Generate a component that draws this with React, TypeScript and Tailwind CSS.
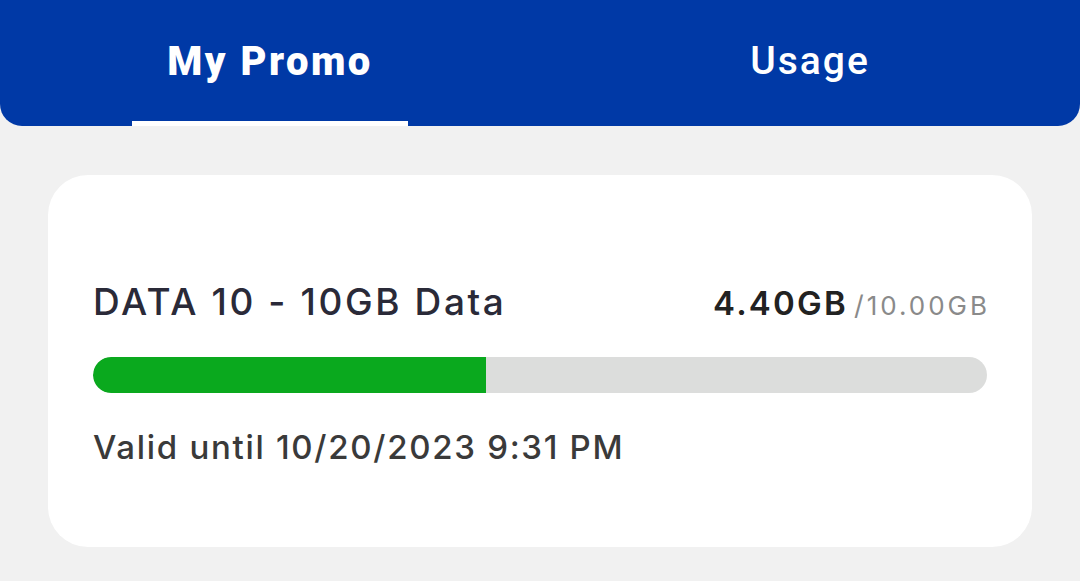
export default function App() {
  return (
    <div className="w-[1080px] h-[581px] bg-[#f1f1f1] overflow-hidden" style={{ fontFamily: 'Inter, "Noto Sans", sans-serif' }}>
      <div className="h-[126px] bg-[#0039a6] rounded-b-[22px] flex">
        <div className="w-1/2 flex justify-center">
          <div className="w-[276px] h-full flex flex-col items-center justify-end">
            <div className="flex-1 flex items-center pt-[2px] text-white text-[40px] font-black tracking-[2.5px]" style={{ fontFamily: 'Roboto, "Noto Sans", sans-serif' }}>My Promo</div>
            <div className="w-full h-[5px] bg-white" />
          </div>
        </div>
        <div className="w-1/2 flex justify-center">
          <div className="h-full flex flex-col items-center pb-[5px]">
            <div className="flex-1 flex items-center pt-[2px] text-white text-[39px] font-medium tracking-[2px]" style={{ fontFamily: 'Roboto, "Noto Sans", sans-serif' }}>Usage</div>
          </div>
        </div>
      </div>
      <div className="mx-[48px] mt-[49px] h-[372px] bg-white rounded-[40px] px-[45px] pt-[108px]">
        <div className="flex items-baseline justify-between h-[48px]">
          <div className="text-[37px] font-medium text-[#2a2a38] leading-none tracking-[2.6px]">DATA 10 - 10GB Data</div>
          <div className="flex items-baseline">
            <span className="text-[33px] font-semibold text-[#222] leading-none tracking-[2.2px]">4.40GB</span>
            <span className="text-[27px] text-[#8a8a8a] leading-none ml-[6px]">/</span>
            <span className="text-[26px] text-[#8a8a8a] leading-none ml-[3px] tracking-[3px] mr-[-3px]">10.00GB</span>
          </div>
        </div>
        <div className="mt-[26px] h-[36px] rounded-full bg-[#dcdddc] overflow-hidden">
          <div className="h-full bg-[#0aa91e] rounded-l-full" style={{ width: '44%' }} />
        </div>
        <div className="mt-[38px] text-[33px] font-medium text-[#3a3a3a] leading-none tracking-[1.7px]">Valid until 10/20/2023 9:31 PM</div>
      </div>
    </div>
  );
}
